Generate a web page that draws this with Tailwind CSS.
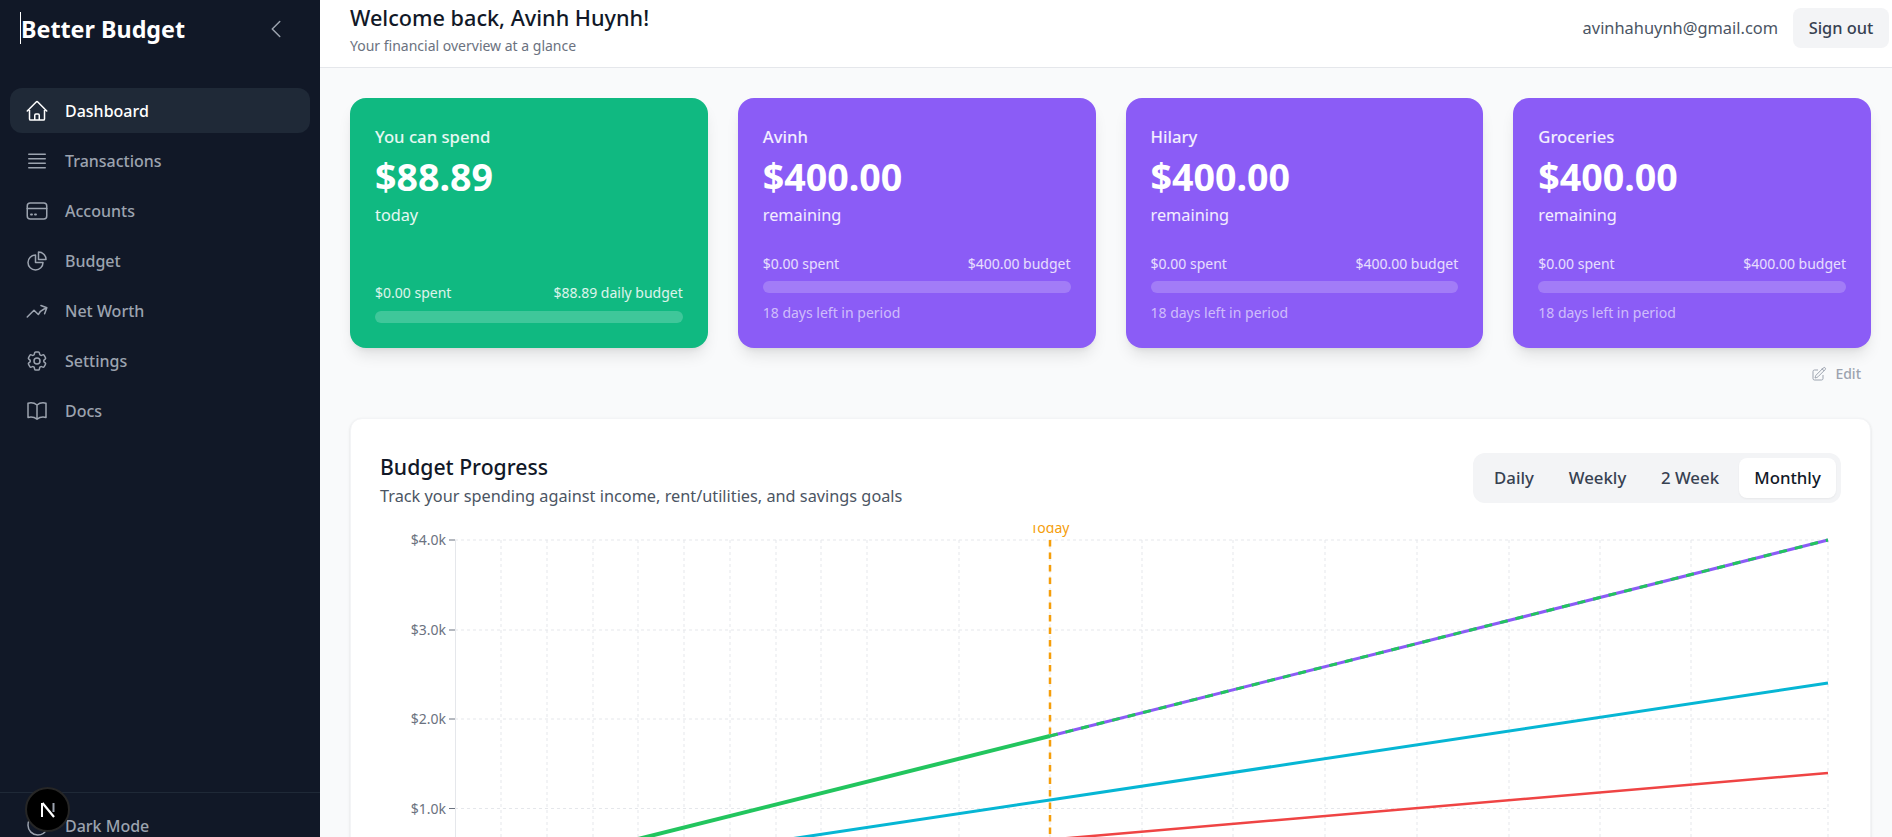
<!DOCTYPE html>
<html lang="en">
<head>
    <meta charset="UTF-8">
    <meta name="viewport" content="width=device-width, initial-scale=1.0">
    <title>Better Budget | Dashboard</title>
    <script src="https://cdn.jsdelivr.net/npm/@tailwindcss/browser@4"></script>
</head>
<body class="h-[837px] overflow-hidden bg-[#f9fafb] font-['Noto_Sans',sans-serif]">
    <div class="flex h-[837px]">

        <!-- Sidebar -->
        <aside class="flex h-full w-80 shrink-0 flex-col bg-[#111827]">
            <div class="flex h-[88px] items-start justify-between pl-5 pr-8 pt-3">
                <div class="flex items-start">
                    <span class="h-8 w-px bg-white"></span>
                    <span class="pt-px text-[23.3px] leading-8 font-bold text-white">Better Budget</span>
                </div>
                <svg class="mt-[5px] size-6 text-[#9ca3af]" fill="none" stroke="currentColor" stroke-width="1.5" viewBox="0 0 24 24"><path stroke-linecap="round" stroke-linejoin="round" d="M15.75 19.5 8.25 12l7.5-7.5"/></svg>
            </div>
            <nav class="flex flex-1 flex-col gap-[5px] px-2.5">
                <a class="flex h-[45px] items-center gap-4 rounded-xl bg-[#1f2937] px-[15px] font-medium text-white">
                    <svg class="size-6 shrink-0" fill="none" stroke="currentColor" stroke-width="1.5" viewBox="0 0 24 24"><path stroke-linecap="round" stroke-linejoin="round" d="m2.25 12 8.954-8.955c.44-.439 1.152-.439 1.591 0L21.75 12M4.5 9.75v10.125c0 .621.504 1.125 1.125 1.125H9.75v-4.875c0-.621.504-1.125 1.125-1.125h2.25c.621 0 1.125.504 1.125 1.125V21h4.125c.621 0 1.125-.504 1.125-1.125V9.75M8.25 21h8.25"/></svg>
                    Dashboard
                </a>
                <a class="flex h-[45px] items-center gap-4 rounded-xl px-[15px] font-medium text-[#9ca3af]">
                    <svg class="size-6 shrink-0" fill="none" stroke="currentColor" stroke-width="1.5" viewBox="0 0 24 24"><path stroke-linecap="round" stroke-linejoin="round" d="M3.75 5.25h16.5m-16.5 4.5h16.5m-16.5 4.5h16.5m-16.5 4.5h16.5"/></svg>
                    Transactions
                </a>
                <a class="flex h-[45px] items-center gap-4 rounded-xl px-[15px] font-medium text-[#9ca3af]">
                    <svg class="size-6 shrink-0" fill="none" stroke="currentColor" stroke-width="1.5" viewBox="0 0 24 24"><rect x="2.25" y="4" width="19.5" height="16" rx="3"/><path stroke-linecap="round" d="M2.25 9.5h19.5"/><path stroke-linecap="round" stroke-width="1.9" d="M6 15.5h1M10 15.5h1"/></svg>
                    Accounts
                </a>
                <a class="flex h-[45px] items-center gap-4 rounded-xl px-[15px] font-medium text-[#9ca3af]">
                    <svg class="size-6 shrink-0" fill="none" stroke="currentColor" stroke-width="1.5" viewBox="0 0 24 24"><path stroke-linecap="round" stroke-linejoin="round" d="M10.5 6a7.5 7.5 0 1 0 7.5 7.5h-7.5V6Z"/><path stroke-linecap="round" stroke-linejoin="round" d="M13.5 10.5H21A7.5 7.5 0 0 0 13.5 3v7.5Z"/></svg>
                    Budget
                </a>
                <a class="flex h-[45px] items-center gap-4 rounded-xl px-[15px] font-medium text-[#9ca3af]">
                    <svg class="size-6 shrink-0" fill="none" stroke="currentColor" stroke-width="1.5" viewBox="0 0 24 24"><path stroke-linecap="round" stroke-linejoin="round" d="M2.25 18 9 11.25l4.306 4.306a11.95 11.95 0 0 1 5.814-5.518l2.74-1.22m0 0-5.94-2.281m5.94 2.28-2.28 5.941"/></svg>
                    Net Worth
                </a>
                <a class="flex h-[45px] items-center gap-4 rounded-xl px-[15px] font-medium text-[#9ca3af]">
                    <svg class="size-6 shrink-0" fill="none" stroke="currentColor" stroke-width="1.5" viewBox="0 0 24 24"><path stroke-linecap="round" stroke-linejoin="round" d="M9.594 3.94c.09-.542.56-.94 1.11-.94h2.593c.55 0 1.02.398 1.11.94l.213 1.281c.063.374.313.686.645.87.074.04.147.083.22.127.325.196.72.257 1.075.124l1.217-.456a1.125 1.125 0 0 1 1.37.49l1.296 2.247a1.125 1.125 0 0 1-.26 1.431l-1.003.827c-.293.241-.438.613-.43.992a7.723 7.723 0 0 1 0 .255c-.008.378.137.75.43.991l1.004.827c.424.35.534.955.26 1.43l-1.298 2.247a1.125 1.125 0 0 1-1.369.491l-1.217-.456c-.355-.133-.75-.072-1.076.124a6.47 6.47 0 0 1-.22.128c-.331.183-.581.495-.644.869l-.213 1.281c-.09.543-.56.94-1.11.94h-2.594c-.55 0-1.019-.398-1.11-.94l-.213-1.281c-.062-.374-.312-.686-.644-.87a6.52 6.52 0 0 1-.22-.127c-.325-.196-.72-.257-1.076-.124l-1.217.456a1.125 1.125 0 0 1-1.369-.49l-1.297-2.247a1.125 1.125 0 0 1 .26-1.431l1.004-.827c.292-.24.437-.613.43-.991a6.932 6.932 0 0 1 0-.255c.007-.38-.138-.751-.43-.992l-1.004-.827a1.125 1.125 0 0 1-.26-1.43l1.297-2.247a1.125 1.125 0 0 1 1.37-.491l1.216.456c.356.133.751.072 1.076-.124.072-.044.146-.086.22-.128.332-.183.582-.495.644-.869l.214-1.28Z"/><path stroke-linecap="round" stroke-linejoin="round" d="M15 12a3 3 0 1 1-6 0 3 3 0 0 1 6 0Z"/></svg>
                    Settings
                </a>
                <a class="flex h-[45px] items-center gap-4 rounded-xl px-[15px] font-medium text-[#9ca3af]">
                    <svg class="size-6 shrink-0" fill="none" stroke="currentColor" stroke-width="1.5" viewBox="0 0 24 24"><path stroke-linecap="round" stroke-linejoin="round" d="M12 6.042A8.967 8.967 0 0 0 6 3.75c-1.052 0-2.062.18-3 .512v14.25A8.987 8.987 0 0 1 6 18c2.305 0 4.408.867 6 2.292m0-14.25a8.966 8.966 0 0 1 6-2.292c1.052 0 2.062.18 3 .512v14.25A8.987 8.987 0 0 0 18 18a8.967 8.967 0 0 0-6 2.292m0-14.25v14.25"/></svg>
                    Docs
                </a>
            </nav>
            <div class="h-[45px] border-t border-[#1f2937] pl-[25px] pt-[21px]">
                <div class="flex items-center gap-4 font-medium text-[#9ca3af]">
                    <svg class="size-6 shrink-0" fill="none" stroke="currentColor" stroke-width="1.5" viewBox="0 0 24 24"><path stroke-linecap="round" stroke-linejoin="round" d="M21.752 15.002A9.72 9.72 0 0 1 18 15.75c-5.385 0-9.75-4.365-9.75-9.75 0-1.33.266-2.597.748-3.752A9.753 9.753 0 0 0 3 11.25C3 16.635 7.365 21 12.75 21a9.753 9.753 0 0 0 9.002-5.998Z"/></svg>
                    Dark Mode
                </div>
            </div>
        </aside>

        <!-- Next dev badge -->
        <div class="absolute left-[25px] top-[787px] flex size-[45px] items-center justify-center rounded-full border-2 border-neutral-800 bg-black">
            <svg class="size-[18px]" viewBox="0 0 18 18" fill="none" stroke="white" stroke-width="2"><path d="M3 2v14"/><path d="M3.5 2 15 16" stroke-width="2.2"/><path d="M14.5 2v9" stroke="#9ca3af"/></svg>
        </div>

        <div class="flex min-w-0 flex-1 flex-col">
            <!-- Header -->
            <header class="flex h-[68px] shrink-0 justify-between border-b border-[#e5e7eb] bg-white pl-[30px] pr-[3px]">
                <div>
                    <h1 class="text-[21.65px] leading-[36px] font-medium text-[#111827]">Welcome back, Avinh Huynh!</h1>
                    <p class="text-sm leading-5 text-[#6b7280]">Your financial overview at a glance</p>
                </div>
                <div class="flex h-14 items-center gap-[15px]">
                    <span class="text-[16.4px] text-[#4b5563]">avinhahuynh@gmail.com</span>
                    <button class="flex h-10 w-24 items-center justify-center rounded-lg bg-[#f3f4f6] text-[16.4px] font-medium text-[#374151]">Sign out</button>
                </div>
            </header>

            <main class="flex-1 overflow-hidden pl-[30px] pr-[21px] pt-[30px]">
                <!-- Budget cards -->
                <div class="grid h-[250px] grid-cols-4 gap-[30px]">
                    <div class="flex flex-col rounded-2xl bg-[#10b981] p-[25px] text-white shadow-lg">
                        <p class="text-[16.7px] leading-7 font-medium text-white/90">You can spend</p>
                        <p class="mt-[3px] text-[37.6px] leading-[46px] font-bold">$88.89</p>
                        <p class="mt-[3px] text-[16.3px] leading-6 text-white/90">today</p>
                        <div class="mt-auto">
                            <div class="flex justify-between text-sm leading-5 text-white/85"><span>$0.00 spent</span><span>$88.89 daily budget</span></div>
                            <div class="mt-2 h-3 rounded-full bg-white/20"></div>
                        </div>
                    </div>
                    <div class="flex flex-col rounded-2xl bg-[#8b5cf6] p-[25px] text-white shadow-lg">
                        <p class="text-[16.7px] leading-7 font-medium text-white/90">Avinh</p>
                        <p class="mt-[3px] text-[37.6px] leading-[46px] font-bold">$400.00</p>
                        <p class="mt-[3px] text-[16.3px] leading-6 text-white/90">remaining</p>
                        <div class="mt-auto">
                            <div class="flex justify-between text-sm leading-5 text-white/80"><span>$0.00 spent</span><span>$400.00 budget</span></div>
                            <div class="mt-[7px] h-3 rounded-full bg-white/20"></div>
                            <p class="mt-2.5 text-sm leading-5 text-white/60">18 days left in period</p>
                        </div>
                    </div>
                    <div class="flex flex-col rounded-2xl bg-[#8b5cf6] p-[25px] text-white shadow-lg">
                        <p class="text-[16.7px] leading-7 font-medium text-white/90">Hilary</p>
                        <p class="mt-[3px] text-[37.6px] leading-[46px] font-bold">$400.00</p>
                        <p class="mt-[3px] text-[16.3px] leading-6 text-white/90">remaining</p>
                        <div class="mt-auto">
                            <div class="flex justify-between text-sm leading-5 text-white/80"><span>$0.00 spent</span><span>$400.00 budget</span></div>
                            <div class="mt-[7px] h-3 rounded-full bg-white/20"></div>
                            <p class="mt-2.5 text-sm leading-5 text-white/60">18 days left in period</p>
                        </div>
                    </div>
                    <div class="flex flex-col rounded-2xl bg-[#8b5cf6] p-[25px] text-white shadow-lg">
                        <p class="text-[16.7px] leading-7 font-medium text-white/90">Groceries</p>
                        <p class="mt-[3px] text-[37.6px] leading-[46px] font-bold">$400.00</p>
                        <p class="mt-[3px] text-[16.3px] leading-6 text-white/90">remaining</p>
                        <div class="mt-auto">
                            <div class="flex justify-between text-sm leading-5 text-white/80"><span>$0.00 spent</span><span>$400.00 budget</span></div>
                            <div class="mt-[7px] h-3 rounded-full bg-white/20"></div>
                            <p class="mt-2.5 text-sm leading-5 text-white/60">18 days left in period</p>
                        </div>
                    </div>
                </div>

                <div class="flex h-[70px] items-start justify-end pr-2.5 pt-4">
                    <button class="flex items-center gap-2 text-sm leading-5 font-medium text-[#9ca3af]">
                        <svg class="size-4" fill="none" stroke="currentColor" stroke-width="1.5" viewBox="0 0 24 24"><path stroke-linecap="round" stroke-linejoin="round" d="m16.862 4.487 1.687-1.688a1.875 1.875 0 1 1 2.652 2.652L10.582 16.07a4.5 4.5 0 0 1-1.897 1.13L6 18l.8-2.685a4.5 4.5 0 0 1 1.13-1.897l8.932-8.931Zm0 0L19.5 7.125M18 14v4.75A2.25 2.25 0 0 1 15.75 21H5.25A2.25 2.25 0 0 1 3 18.75V8.25A2.25 2.25 0 0 1 5.25 6H10"/></svg>
                        Edit
                    </button>
                </div>

                <!-- Budget progress chart -->
                <section class="h-[500px] rounded-xl border border-[#f3f4f6] bg-white px-[29px] pt-[34px] shadow-sm">
                    <div class="flex h-[50px] justify-between">
                        <div>
                            <h2 class="text-[21.2px] leading-7 font-medium text-[#111827]">Budget Progress</h2>
                            <p class="mt-[3px] text-[16.3px] leading-6 text-[#4b5563]">Track your spending against income, rent/utilities, and savings goals</p>
                        </div>
                        <div class="flex h-[50px] items-center rounded-xl bg-[#f3f4f6] px-[5px] text-[16.8px] font-medium text-[#374151]">
                            <button class="h-10 w-[76px] pr-1">Daily</button>
                            <button class="h-10 w-[87px]">Weekly</button>
                            <button class="h-10 w-[98px]">2 Week</button>
                            <button class="h-10 w-[97px] rounded-lg bg-white text-[#111827] shadow-xs">Monthly</button>
                        </div>
                    </div>
                    <svg class="mt-[22px] block" width="1461" height="320" viewBox="380 525 1461 320" fill="none">
                        <g stroke="#e5e7eb" stroke-dasharray="3 3">
                            <path d="M455 540H1828M455 630H1828M455 719H1828M455 808.5H1828"/>
                            <path d="M501 540V845M547 540V845M593 540V845M638 540V845M684 540V845M730 540V845M776 540V845M821 540V845M867 540V845M959 540V845M1050 540V845M1142 540V845M1233 540V845M1325 540V845M1417 540V845M1509 540V845M1600 540V845M1691 540V845M1828 540V845"/>
                        </g>
                        <path d="M455.5 540V845" stroke="#e5e7eb"/>
                        <path d="M449 540H455M449 630H455M449 719H455M449 808.5H455" stroke="#6b7280"/>
                        <g fill="#6b7280" font-size="14" text-anchor="end">
                            <text x="446" y="545">$4.0k</text>
                            <text x="446" y="635">$3.0k</text>
                            <text x="446" y="724">$2.0k</text>
                            <text x="446" y="813.5">$1.0k</text>
                        </g>
                        <text x="1050" y="533" fill="#f59e0b" font-size="14" text-anchor="middle">Today</text>
                        <path d="M1050 540V845" stroke="#f59e0b" stroke-width="2.5" stroke-dasharray="6.5 6"/>
                        <path d="M1050 839.6 1828 773" stroke="#ef4444" stroke-width="2.5"/>
                        <path d="M790 839 1050 800 1828 683" stroke="#06b6d4" stroke-width="3"/>
                        <path d="M1050 736 1828 540" stroke="#8b5cf6" stroke-width="3"/>
                        <path d="M1050 736 1828 540" stroke="#22c55e" stroke-width="3" stroke-dasharray="8 8"/>
                        <path d="M630 841 1050 736" stroke="#22c55e" stroke-width="4"/>
                    </svg>
                </section>
            </main>
        </div>
    </div>
</body>
</html>
